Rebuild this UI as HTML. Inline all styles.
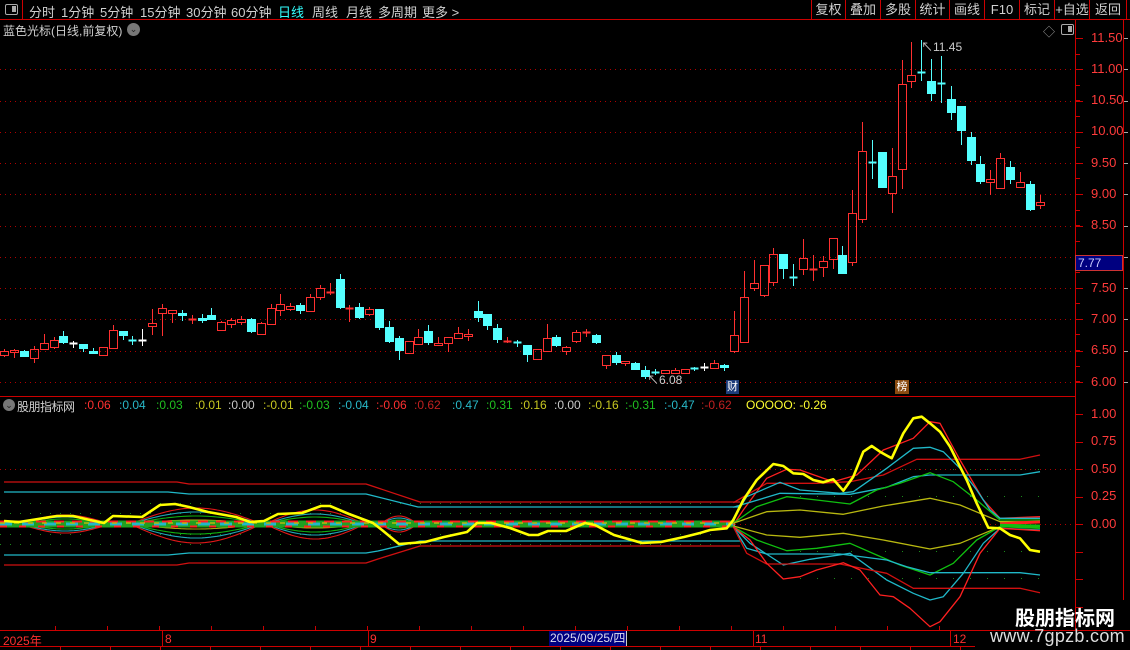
<!DOCTYPE html>
<html><head><meta charset="utf-8">
<style>
*{margin:0;padding:0;box-sizing:border-box}
body{width:1130px;height:650px;background:#000;overflow:hidden;position:relative;font-family:"Liberation Sans","Noto Sans CJK SC",sans-serif;color:#c8c8c8}
.a{position:absolute;white-space:nowrap}
.t{font-size:13px;top:2px;color:#d0d0d0}
.btn{position:absolute;top:0;height:19px;border-left:1px solid #c00;font-size:13px;color:#d0d0d0;text-align:center;line-height:19px}
.ax{position:absolute;left:1091px;font-size:13px;color:#ff3b3b}
.h{position:absolute;top:398px;font-size:12px}
svg{position:absolute;left:0;top:0}
</style></head><body>
<svg id="s" width="1130" height="650"></svg>

<div class="a" style="left:0;top:0;width:23px;height:19px;border-right:1px solid #c00"></div>
<div class="a" style="left:5px;top:4px;width:13px;height:11px;border:1.5px solid #aaa;border-radius:2px"><div style="position:absolute;right:1px;top:1px;width:4px;height:6px;background:#aaa"></div></div>
<div class="a t" style="left:29px">分时</div>
<div class="a t" style="left:61px">1分钟</div>
<div class="a t" style="left:100px">5分钟</div>
<div class="a t" style="left:140px">15分钟</div>
<div class="a t" style="left:186px">30分钟</div>
<div class="a t" style="left:231px">60分钟</div>
<div class="a t" style="left:278px;color:#3ff">日线</div>
<div class="a t" style="left:312px">周线</div>
<div class="a t" style="left:346px">月线</div>
<div class="a t" style="left:378px">多周期</div>
<div class="a t" style="left:422px">更多 &gt;</div>
<div class="btn" style="left:811px;width:34px">复权</div>
<div class="btn" style="left:845px;width:35px">叠加</div>
<div class="btn" style="left:880px;width:35px">多股</div>
<div class="btn" style="left:915px;width:34px">统计</div>
<div class="btn" style="left:949px;width:35px">画线</div>
<div class="btn" style="left:984px;width:35px">F10</div>
<div class="btn" style="left:1019px;width:35px">标记</div>
<div class="btn" style="left:1054px;width:35px">+自选</div>
<div class="btn" style="left:1089px;width:38px;border-right:1px solid #c00">返回</div>

<div class="a" style="left:3px;top:22px;font-size:12px;color:#d0d0d0">蓝色光标(日线,前复权)</div>
<div class="a" style="left:127px;top:23px;width:13px;height:13px;border-radius:50%;background:#777;color:#222;font-size:9px;text-align:center;line-height:13px">&#8964;</div>
<div class="a" style="left:1043px;top:23px;color:#999;font-size:12px">◇</div>
<div class="a" style="left:1061px;top:24px;width:13px;height:11px;border:1.5px solid #aaa;border-radius:2px"><div style="position:absolute;right:1px;top:1px;width:4px;height:6px;background:#aaa"></div></div>

<div class="ax" style="top:30px">11.50</div>
<div class="ax" style="top:61px">11.00</div>
<div class="ax" style="top:92px">10.50</div>
<div class="ax" style="top:123px">10.00</div>
<div class="ax" style="top:155px">9.50</div>
<div class="ax" style="top:186px">9.00</div>
<div class="ax" style="top:217px">8.50</div>
<div class="ax" style="top:280px">7.50</div>
<div class="ax" style="top:311px">7.00</div>
<div class="ax" style="top:342px">6.50</div>
<div class="ax" style="top:374px">6.00</div>
<div class="a" style="left:1075px;top:255px;width:48px;height:16px;background:#000080;border:1px solid #c33;color:#ccf;font-size:12px;line-height:14px;padding-left:2px">7.77</div>

<div class="ax" style="top:406px">1.00</div>
<div class="ax" style="top:433px">0.75</div>
<div class="ax" style="top:461px">0.50</div>
<div class="ax" style="top:488px">0.25</div>
<div class="ax" style="top:516px">0.00</div>

<div class="a" style="left:726px;top:380px;width:13px;height:14px;background:#1d3c7a;color:#fff;font-size:11px;line-height:14px;text-align:center">财</div>
<div class="a" style="left:895px;top:380px;width:14px;height:14px;background:#8a4a10;color:#fff;font-size:11px;line-height:14px;text-align:center">榜</div>
<div class="a" style="left:647px;top:371px;font-size:12px;color:#ccc">↖6.08</div>
<div class="a" style="left:921px;top:38px;font-size:12px;color:#ccc">↖11.45</div>

<div class="a" style="left:3px;top:399px;width:12px;height:12px;border-radius:50%;background:#777;color:#222;font-size:9px;text-align:center;line-height:12px">&#8964;</div>
<div class="h" style="left:17px;color:#d0d0d0;font-size:12px;top:398px;letter-spacing:-0.5px">股朋指标网</div>
<div class="h" style="left:84px;color:#ff3030">:0.06</div>
<div class="h" style="left:119px;color:#28b8c8">:0.04</div>
<div class="h" style="left:156px;color:#20c020">:0.03</div>
<div class="h" style="left:195px;color:#c8c820">:0.01</div>
<div class="h" style="left:228px;color:#c8c8c8">:0.00</div>
<div class="h" style="left:263px;color:#c8c820">:-0.01</div>
<div class="h" style="left:299px;color:#20c020">:-0.03</div>
<div class="h" style="left:338px;color:#28b8c8">:-0.04</div>
<div class="h" style="left:376px;color:#ff3030">:-0.06</div>
<div class="h" style="left:414px;color:#c02020">:0.62</div>
<div class="h" style="left:452px;color:#28b8c8">:0.47</div>
<div class="h" style="left:486px;color:#20c020">:0.31</div>
<div class="h" style="left:520px;color:#c8c820">:0.16</div>
<div class="h" style="left:554px;color:#c8c8c8">:0.00</div>
<div class="h" style="left:588px;color:#c8c820">:-0.16</div>
<div class="h" style="left:625px;color:#20c020">:-0.31</div>
<div class="h" style="left:664px;color:#28b8c8">:-0.47</div>
<div class="h" style="left:701px;color:#c02020">:-0.62</div>
<div class="h" style="left:746px;color:#ffff30">OOOOO: -0.26</div>

<div class="a" style="left:3px;top:632px;font-size:12px;color:#ff3030">2025年</div>
<div class="a" style="left:165px;top:632px;font-size:12px;color:#ff3030">8</div>
<div class="a" style="left:370px;top:632px;font-size:12px;color:#ff3030">9</div>
<div class="a" style="left:549px;top:631px;width:78px;height:15px;background:#000080;font-size:12px;color:#dde;line-height:15px;padding-left:1px;border-right:1px solid #ccc">2025/09/25/四</div>
<div class="a" style="left:755px;top:632px;font-size:12px;color:#ff3030">11</div>
<div class="a" style="left:953px;top:632px;font-size:12px;color:#ff3030">12</div>
<div class="a" style="left:1015px;top:602px;font-size:20px;font-weight:bold;color:#fff">股朋指标网</div>
<div class="a" style="left:990px;top:626px;font-size:18px;color:#ddd;letter-spacing:0.3px">www.7gpzb.com</div>

<script>
var S=document.getElementById('s'),h='';
function L(x1,y1,x2,y2,c,w,d){h+='<line x1="'+x1+'" y1="'+y1+'" x2="'+x2+'" y2="'+y2+'" stroke="'+c+'" stroke-width="'+(w||1)+'"'+(d?' stroke-dasharray="'+d+'"':'')+'/>';}
function P(pts,c,w){h+='<polyline fill="none" stroke="'+c+'" stroke-width="'+(w||1)+'" stroke-linejoin="round" points="'+pts.map(function(p){return p[0]+','+p[1]}).join(' ')+'"/>';}
L(0,19.5,1130,19.5,'#c00');L(1075.5,19,1075.5,630,'#c00');L(1123.5,19,1123.5,600,'#c00');
L(0,396.5,1076,396.5,'#c00');L(0,630.5,1130,630.5,'#c00');L(0,646.5,975,646.5,'#c00');
[162,368,753,950].forEach(function(x){L(x+.5,631,x+.5,646,'#c00')});
for(var x=60;x<975;x+=50)L(x+.5,646,x+.5,650,'#c00');
for(var x=55;x<975;x+=52)L(x+.5,626,x+.5,630,'#c00');
for(var y=38;y<390;y+=15.6)L(1076,Math.round(y)+.5,1080,Math.round(y)+.5,'#c00');
for(var k=0;k<12;k++){var y=Math.round(38+k*31.25)+.5;L(1076,y,1083,y,'#c00');L(1124,y,1128,y,'#aaa');}
for(var k=0;k<8;k++){var y=Math.round(414+k*27.5)+.5;L(1076,y,1083,y,'#c00');}
for(var k=1;k<12;k++){var y=Math.round(38+k*31.25)+.5;L(0,y,1075,y,'#b00000',1,'1 4');}
L(0,469.5,1075,469.5,'#b00000',1,'1 4');L(0,524.5,1075,524.5,'#b00000',1,'1 4');
[503,513,534,544].forEach(function(y){L(0,y+.5,720,y+.5,'#1a8a1a',1,'1 9')});
[469,496,551,578].forEach(function(y){L(800,y+.5,1045,y+.5,'#1a8a1a',1,'1 16')});
var D=[['r',351,355,349,357],['r',350,352,349,358],['c',351,357,350,357],['r',349,358,346,363],['r',343,349,334,350],['r',340,347,337,349],['c',336,343,331,344],['wx',343,343,341,348],['c',344,349,344,352],['c',351,354,348,354],['r',347,355,347,355],['r',330,348,325,348],['c',331,336,331,340],['cx',340,340,336,345],['wx',340,340,329,346],['r',323,326,309,335],['r',308,313,304,336],['r',310,313,310,323],['c',313,316,310,321],['rx',319,319,315,324],['c',318,321,314,323],['c',315,320,308,320],['r',322,330,321,331],['r',320,324,318,328],['r',319,322,316,325],['c',319,332,318,333],['r',323,334,322,335],['r',308,324,304,324],['r',304,310,294,316],['r',306,309,303,311],['c',305,311,303,314],['r',297,311,294,311],['r',288,297,285,300],['rx',292,292,283,295],['c',279,308,274,309],['rx',308,308,305,322],['c',307,318,303,319],['r',309,314,307,316],['c',309,328,309,330],
['c',327,342,321,343],['c',338,351,336,360],['r',341,353,341,354],['r',337,344,329,345],['c',331,343,325,345],['r',343,345,337,345],['r',337,343,337,352],['r',333,338,327,338],['r',334,336,329,341],['c',311,318,301,322],['c',314,326,314,330],['c',328,340,324,343],['rx',341,341,337,343],['cx',342,342,340,347],['c',345,355,345,362],['r',349,359,349,359],['r',338,351,324,351],['c',337,346,335,347],['r',347,351,346,355],['r',332,341,330,343],['rx',332,332,329,337],['c',335,343,334,344],['r',355,365,355,369],['c',355,363,352,365],['r',361,363,361,366],['c',363,370,362,370],['c',370,377,366,379],['cx',372,372,369,375],['r',370,373,370,373],['r',370,373,368,373],['r',369,373,369,374],['cx',368,368,367,371],['wx',367,367,363,371],['r',363,368,360,368],['c',365,368,364,371],
['r',335,351,311,353],['r',297,342,271,342],['r',283,288,260,291],['r',265,295,265,297],['r',254,282,248,286],['c',254,269,254,279],['cx',277,277,264,286],['r',258,269,239,275],['rx',269,269,255,281],['r',261,267,256,277],['r',238,259,238,269],['c',255,274,246,274],['r',213,262,190,266],['r',151,219,122,223],['cx',162,162,140,179],['c',152,188,152,188],['r',176,193,148,213],['r',84,169,60,189],['r',75,81,42,88],['cx',72,72,40,81],['c',81,94,59,101],['cx',83,83,56,103],['c',99,113,86,120],['c',106,131,106,145],['c',137,161,132,165],['c',164,182,156,184],['r',179,182,170,195],['r',158,188,153,188],['c',167,180,161,184],['r',182,187,172,187],['c',184,210,181,211],['r',202,205,195,209]];
var R='#ff3030',C='#54ffff';
D.forEach(function(d,i){var x=Math.round(4.3+9.86*i)+.5,t=d[0];
 var col=t[0]=='r'?R:t[0]=='c'?C:'#fff';
 if(t.length==2){L(x,d[3],x,d[4],col);L(x-4,d[1]+.5,x+4,d[1]+.5,col,2);return;}
 if(t=='r'){L(x,d[3],x,d[1],col);L(x,d[2],x,d[4],col);h+='<rect x="'+(x-4)+'" y="'+(d[1]+.5)+'" width="8" height="'+Math.max(d[2]-d[1],2)+'" fill="none" stroke="'+R+'"/>';}
 else{L(x,d[3],x,d[4],C);h+='<rect x="'+(x-4.5)+'" y="'+d[1]+'" width="9" height="'+Math.max(d[2]-d[1],2)+'" fill="'+C+'"/>';}
});
function Z9(a){return a.map(function(p){return[(700+p[0]/3).toFixed(1),(400+p[1]/3).toFixed(1)]})}
function lens(x0,x1,amp,c,sgn){var a=[];for(var x=x0;x<=x1;x+=3){a.push([x,(524-sgn*amp*Math.sin(Math.PI*(x-x0)/(x1-x0))).toFixed(1)])}P(a,c,1.1);}
[[20,110,[9,7,5,3],[9,7,5,3]],[130,262,[16,12,8,4],[19,14,10,5]],[265,365,[14,10,7,3],[15,11,8,4]],[380,418,[8,6,4,2],[8,6,4,2]]].forEach(function(b){
 var cs=['#e01818','#20a8b8','#10b010','#a8a810'];
 for(var k=0;k<4;k++){lens(b[0],b[1],b[2][k],cs[k],1);lens(b[0],b[1],b[3][k],cs[k],-1);}
});
L(0,524,735,524,'#20a020',7);L(0,521.5,735,521.5,'#ff2020',2,'10 8');L(0,526.5,735,526.5,'#ff2020',2,'7 12');L(0,524,735,524,'#20b8c8',3,'12 10');L(0,523,735,523,'#b8b810',1.5,'5 9');
P([[4,482],[177,482],[189,484],[366,484],[378,488],[420,502],[740,502]],'#d01010',1.3);
P([[4,492],[168,492],[189,494],[366,494],[378,497],[418,507],[740,507]],'#20b8c8',1.3);
P([[4,555],[168,555],[189,553],[366,553],[378,551],[420,541],[740,541]],'#20b8c8',1.3);
P([[4,565],[177,565],[189,563],[366,563],[378,559],[420,546],[740,546]],'#d01010',1.3);
P(Z9([[100,308],[200,250],[350,250],[450,245],[550,225],[650,178],[960,178],[1020,165]]),'#d01010',1.3);
P(Z9([[100,375],[130,330],[200,235],[260,208],[300,210],[400,245],[470,225],[550,150],[640,115],[690,65],[720,70],[780,180],[850,300],[900,355],[1020,350]]),'#ff2020',1.3);
P(Z9([[90,372],[140,290],[240,247],[300,270],[420,280],[460,275],[560,205],[640,145],[690,142],[730,155],[780,205],[830,270],[870,330],[900,355],[1020,355]]),'#20b8c8',1.3);
P(Z9([[100,322],[240,280],[450,283],[560,262],[640,230],[690,225],[960,225],[1020,215]]),'#20b8c8',1.3);
P(Z9([[100,370],[170,320],[260,290],[350,300],[450,312],[530,270],[600,250],[690,218],[760,245],[830,300],[900,360],[1020,360]]),'#10c010',1.3);
P(Z9([[100,370],[200,335],[300,330],[430,343],[550,318],[690,295],[780,315],[900,365],[1020,366]]),'#b8b810',1.3);
P(Z9([[100,378],[200,405],[300,412],[430,400],[550,420],[690,447],[780,430],[900,380],[1020,380]]),'#b8b810',1.3);
P(Z9([[100,380],[170,420],[260,452],[350,445],[450,430],[530,465],[600,495],[690,525],[760,490],[830,420],[900,380],[1020,385]]),'#10c010',1.3);
P(Z9([[100,380],[150,430],[250,495],[330,478],[450,460],[560,540],[640,580],[690,600],[730,590],[790,520],[850,430],[900,385],[1020,390]]),'#20b8c8',1.3);
P(Z9([[100,380],[140,445],[200,462],[420,462],[560,480],[620,500],[690,518],[960,518],[1020,525]]),'#20b8c8',1.3);
P(Z9([[100,380],[140,460],[200,492],[420,492],[560,520],[640,565],[960,565],[1020,578]]),'#d01010',1.3);
P(Z9([[100,380],[150,420],[200,490],[250,537],[300,530],[350,510],[430,488],[480,510],[540,585],[580,590],[630,625],[690,680],[720,665],[780,590],[840,460],[900,385],[1020,392]]),'#ff2020',1.3);
P(Z9([[900,372],[960,368],[1020,366]]),'#ff2020',3);P(Z9([[900,376],[1020,378]]),'#10c010',3);
var Y=[[4,521],[19,522],[38,519],[57,516],[73,516],[90,520],[104,523],[113,516],[142,517],[160,505],[175,504],[189,507],[208,512],[236,517],[250,522],[264,521],[278,514],[302,513],[321,506],[330,506],[349,514],[373,523],[382,530],[399,544],[425,542],[444,537],[467,532],[477,523],[491,523],[510,528],[529,535],[538,535],[548,531],[566,531],[585,523],[595,525],[614,535],[642,543],[661,542],[684,537],[700,533]].concat(Z9([[30,390],[80,385],[100,360],[130,300],[170,240],[220,192],[250,198],[280,220],[310,222],[340,240],[370,247],[400,238],[430,272],[460,230],[490,155],[515,138],[540,155],[575,175],[610,100],[640,55],[665,50],[690,70],[720,95],[750,140],[800,240],[830,310],[865,383],[900,385],[930,405],[960,415],[990,450],[1020,455]]));
P(Y,'#ffff00',2.6);
S.innerHTML=h;
</script>
</body></html>
